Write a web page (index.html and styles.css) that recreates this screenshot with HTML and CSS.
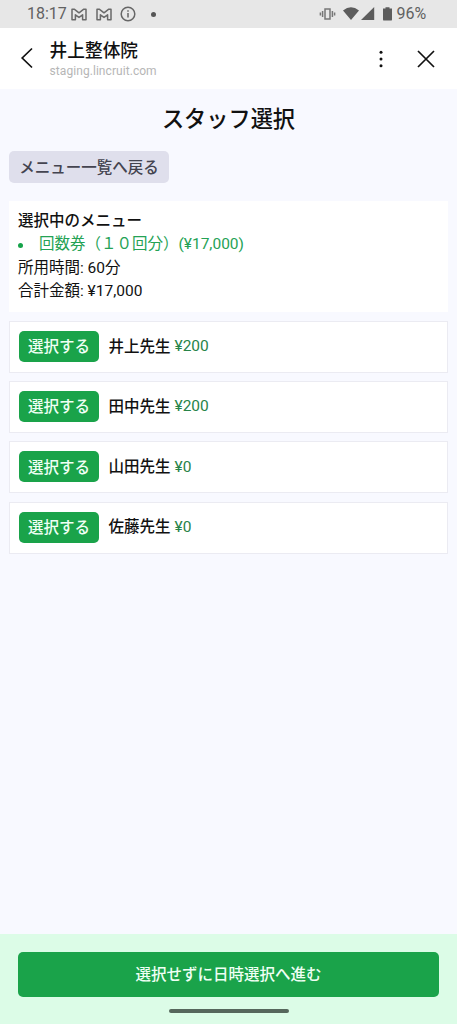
FILE: index.html
```html
<!DOCTYPE html>
<html lang="ja">
<head>
<meta charset="utf-8">
<meta name="viewport" content="width=device-width, initial-scale=1">
<title>スタッフ選択</title>
<link rel="stylesheet" href="styles.css">
</head>
<body>
<div class="screen">
  <div class="status">
    <span class="clock">18:17</span>
    <svg class="mail" width="16" height="13" viewBox="0 0 16 13"><path d="M1 1.2H3.2L8 4.8 12.8 1.2H15V11.8H11.6V6.8L8 9.4 4.4 6.8V11.8H1Z"/></svg>
    <svg class="mail second" width="16" height="13" viewBox="0 0 16 13"><path d="M1 1.2H3.2L8 4.8 12.8 1.2H15V11.8H11.6V6.8L8 9.4 4.4 6.8V11.8H1Z"/></svg>
    <svg class="info" width="16" height="16" viewBox="0 0 16 16"><circle cx="8" cy="8" r="6.8"/><path d="M8 7v4.6M8 4.2v1.6"/></svg>
    <span class="dot"></span>
    <svg class="system" width="74" height="16" viewBox="0 0 74 16">
      <path class="line" d="M6 3h5v10H6zM3.6 5v6M1.4 6.4v3.2M13.4 5v6M15.6 6.4v3.2"/>
      <path d="M24 4.4Q32 -1.8 40 4.4L32 14ZM42 14 55.2 1V14ZM64 2.6h2.5V1.2h4v1.4H73V13.4q0 1.2-1.2 1.2h-6.6q-1.2 0-1.2-1.2Z"/>
    </svg>
    <span class="percent">96%</span>
  </div>
  <header class="bar">
    <svg class="back" width="14" height="22" viewBox="0 0 14 22"><path d="M12 1.5 2.2 11 12 20.5"/></svg>
    <div class="site">
      <div class="site-name">井上整体院</div>
      <div class="site-url">staging.lincruit.com</div>
    </div>
    <svg class="more" width="4" height="18" viewBox="0 0 4 18"><circle cx="2" cy="2.3" r="1.5"/><circle cx="2" cy="9" r="1.5"/><circle cx="2" cy="15.7" r="1.5"/></svg>
    <svg class="close" width="18" height="18" viewBox="0 0 18 18"><path d="M1 1l16 16M17 1 1 17"/></svg>
  </header>
  <main class="content">
    <h1 class="title">スタッフ選択</h1>
    <button class="return">メニュー一覧へ戻る</button>
    <section class="summary">
      <div class="heading">選択中のメニュー</div>
      <div class="menu-item"><span class="bullet"></span><span>回数券（１０回分）(¥17,000)</span></div>
      <div>所用時間: 60分</div>
      <div>合計金額: ¥17,000</div>
    </section>
    <div class="staff"><button class="select">選択する</button><span class="name">井上先生</span><span class="fee">¥200</span></div>
    <div class="staff"><button class="select">選択する</button><span class="name">田中先生</span><span class="fee">¥200</span></div>
    <div class="staff"><button class="select">選択する</button><span class="name">山田先生</span><span class="fee">¥0</span></div>
    <div class="staff"><button class="select">選択する</button><span class="name">佐藤先生</span><span class="fee">¥0</span></div>
  </main>
  <footer class="footer">
    <button class="proceed">選択せずに日時選択へ進む</button>
    <span class="handle"></span>
  </footer>
</div>
</body>
</html>
```
FILE: styles.css
```css
* { box-sizing: border-box; }
body {
  margin: 0;
  background: #f8f9ff;
  color: #111;
  font: 15.5px/23.4px Roboto, "Noto Sans CJK JP", sans-serif;
}
button {
  display: block;
  border: 0;
  padding: 3px 0 0;
  font: inherit;
  font-weight: 500;
  text-align: center;
  white-space: nowrap;
}
svg { display: block; flex: none; }
.screen { display: flex; flex-direction: column; width: 457px; height: 1024px; overflow: hidden; }

.status {
  display: flex;
  align-items: center;
  flex: none;
  height: 28px;
  padding: 0 31px 0 27px;
  background: #e7e7e7;
  color: #616161;
  font-size: 16px;
}
.clock { width: 44px; letter-spacing: -.05px; }
.mail { fill: none; stroke: #6a6a6a; stroke-width: 1.5; stroke-linejoin: round; }
.second { margin-left: 9px; }
.info { margin-left: 8px; fill: none; stroke: #666; stroke-width: 1.5; }
.dot { width: 5px; height: 5px; margin-left: 15px; border-radius: 50%; background: #555; }
.system { margin-left: auto; fill: #5c5c5c; }
.system .line { fill: none; stroke: #777; stroke-width: 1.5; }
.percent { margin-left: 4px; letter-spacing: -.1px; }

.bar { display: flex; align-items: center; flex: none; height: 61px; padding: 0 22px 0 20px; background: #fff; }
.back { margin-top: -2px; fill: none; stroke: #111; stroke-width: 1.7; }
.site { margin: 2px 0 0 15.6px; }
.site-name { font-size: 17.7px; font-weight: 500; line-height: 24px; }
.site-url { color: #b6b6b6; font-size: 12px; line-height: 17px; letter-spacing: .06px; }
.more { margin-left: auto; fill: #111; }
.close { margin-left: 34px; fill: none; stroke: #111; stroke-width: 1.7; }

.content { flex: 1; padding: 0 9px; }
.title { margin: 15px 0 17px; font-size: 22.2px; font-weight: 500; line-height: 30px; text-align: center; }
.return { width: 160px; height: 32px; border-radius: 5px; background: #dfdfec; color: #444450; }
.summary { height: 111px; margin: 18px 0 9px; padding: 9px 9px 0; background: #fff; }
.heading, .name { font-weight: 500; }
.name { padding-top: 2px; }
.menu-item { display: flex; align-items: center; color: #25a255; }
.bullet { width: 5px; height: 5px; margin-right: 16px; border-radius: 50%; background: #16a34a; }
.staff {
  display: flex;
  align-items: center;
  height: 52px;
  margin-bottom: 8.2px;
  padding: 0 0 1px 9px;
  border: 1px solid #ebebf2;
  background: #fff;
}
.select { width: 80px; height: 31px; margin-right: 9.5px; border-radius: 5px; background: #1aa34a; color: #effff4; }
.fee { padding-top: 1px; margin-left: 4px; color: #278348; }

.footer {
  display: flex;
  flex-direction: column;
  align-items: center;
  flex: none;
  height: 90px;
  padding: 18px 18px 0;
  background: #dcfce7;
}
.proceed { width: 100%; height: 45px; border-radius: 5px; background: #1aa34a; color: #effff4; }
.handle { width: 120px; height: 4px; margin-top: 12px; border-radius: 2px; background: #56675c; }
```
